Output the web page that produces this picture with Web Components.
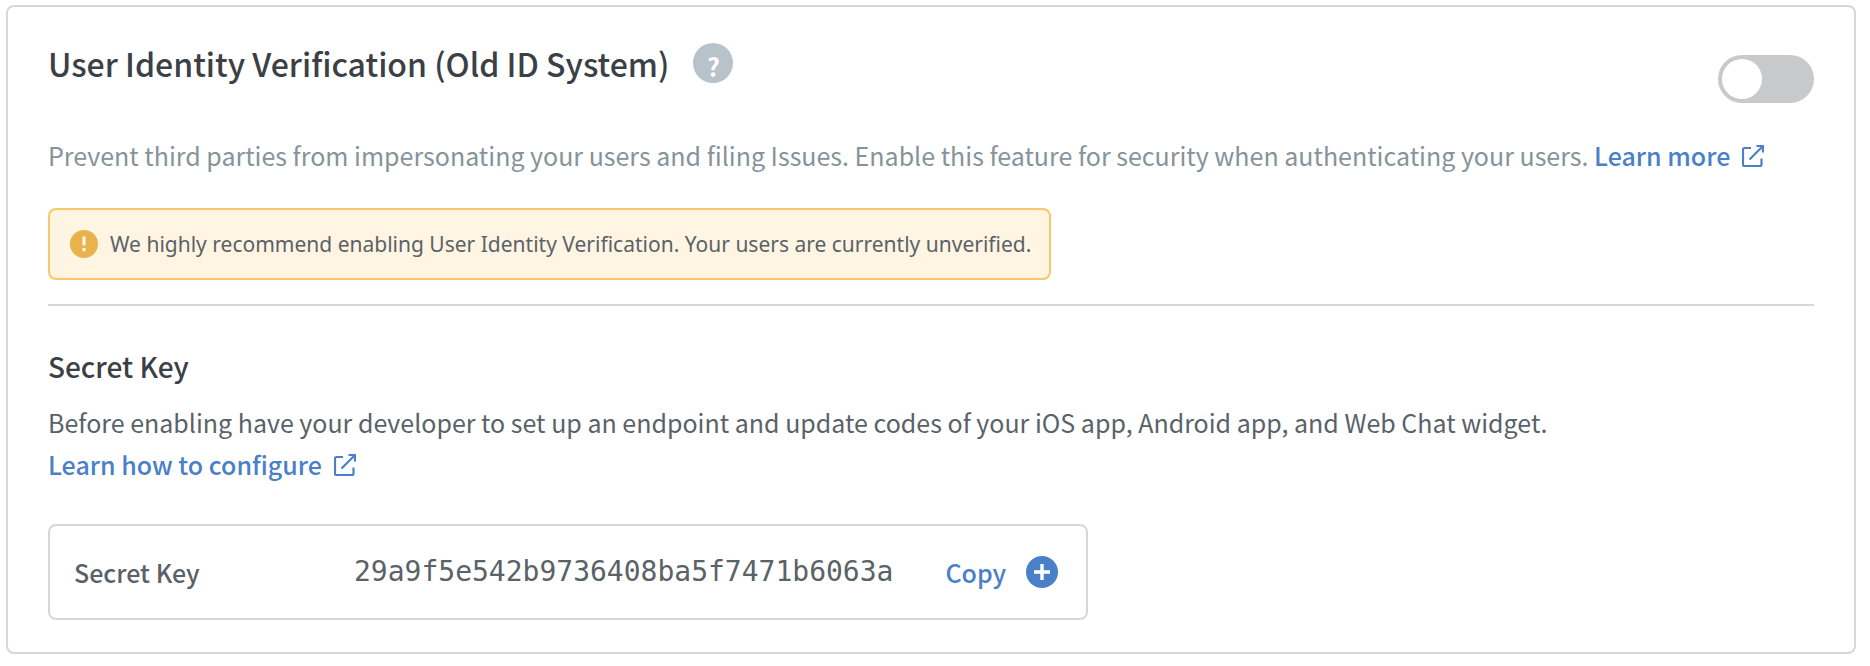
<!DOCTYPE html>
<html lang="en">
<head>
<meta charset="utf-8">
<meta name="viewport" content="width=device-width, initial-scale=1">
<title>User Identity Verification</title>
<style>
  :root {
    --heading: #3a4046;
    --text: #5a6268;
    --muted: #86939a;
    --link: #4a80c8;
    --line: #d5d7d8;
  }
  body {
    margin: 0;
    padding: 5px 14px 11px 6px;
    background: #fff;
    color: var(--text);
    font-family: "Noto Sans CJK SC", "Noto Sans", sans-serif;
    font-size: 25px;
    line-height: 42px;
  }
</style>
</head>
<body>
<settings-card>
  <card-header slot="header" heading="User Identity Verification (Old ID System)"></card-header>
  <card-text slot="intro" tone="muted">Prevent third parties from impersonating your users and filing Issues. Enable this feature for security when authenticating your users. <external-link href="#learn-more">Learn more</external-link></card-text>
  <alert-banner slot="intro">We highly recommend enabling User Identity Verification. Your users are currently unverified.</alert-banner>
  <key-section heading="Secret Key">
    <card-text>Before enabling have your developer to set up an endpoint and update codes of your iOS app, Android app, and Web Chat widget.<br><external-link href="#configure">Learn how to configure</external-link></card-text>
    <secret-key slot="key" label="Secret Key" value="29a9f5e542b9736408ba5f7471b6063a"></secret-key>
  </key-section>
</settings-card>

<script>
  const define = (name, html, setup) => {
    const template = document.createElement('template');
    template.innerHTML = html;
    customElements.define(name, class extends HTMLElement {
      constructor() {
        super();
        this.attachShadow({ mode: 'open' }).append(template.content.cloneNode(true));
      }
      connectedCallback() {
        if (setup) setup(this, (selector) => this.shadowRoot.querySelector(selector));
      }
    });
  };

  define('settings-card', `
    <style>
      :host { display: block; box-sizing: border-box; padding: 36px 40px 32px; border: 2px solid var(--line); border-radius: 8px; }
      hr { height: 2px; margin: 24px 0 40px; border: 0; background: var(--line); }
    </style>
    <slot name="header"></slot>
    <slot name="intro"></slot>
    <hr>
    <slot></slot>`);

  define('help-button', `
    <style>
      :host { display: block; flex: none; }
      button { display: block; box-sizing: border-box; width: 40px; height: 40px; padding: 6px 0 0; border: 0; border-radius: 50%;
        background: #b7c2cb; color: #fff; font: 700 25px/34px "Noto Sans CJK SC", sans-serif; cursor: pointer; }
    </style>
    <button type="button" title="Help">?</button>`);

  define('toggle-switch', `
    <style>
      :host { display: block; flex: none; }
      input { appearance: none; display: block; box-sizing: border-box; width: 96px; height: 48px; margin: 0; padding: 4px;
        border-radius: 24px; background: #c8c9cb; cursor: pointer; }
      input::before { content: ""; display: block; width: 40px; height: 40px; border-radius: 50%; background: #fff; }
      input:checked { background: var(--link); }
      input:checked::before { margin-left: auto; }
    </style>
    <input type="checkbox" role="switch">`,
    (host, $) => $('input').setAttribute('aria-label', host.getAttribute('label')));

  define('card-header', `
    <style>
      :host { display: flex; justify-content: space-between; align-items: flex-start; gap: 24px; }
      .title { display: flex; align-items: center; gap: 24px; }
      h1 { margin: 0; color: var(--heading); font-size: 32px; line-height: 40px; font-weight: 500; }
      toggle-switch { padding-top: 12px; }
    </style>
    <div class="title"><h1></h1><help-button></help-button></div>
    <toggle-switch></toggle-switch>`,
    (host, $) => {
      const heading = host.getAttribute('heading');
      $('h1').textContent = heading;
      $('toggle-switch').setAttribute('label', heading);
    });

  define('card-text', `
    <style>
      :host { display: block; }
      :host([tone="muted"]) { padding: 31px 0 32px; color: var(--muted); }
      p { margin: 0; }
    </style>
    <p><slot></slot></p>`);

  define('external-link', `
    <style>
      :host { display: inline; }
      a { color: var(--link); font-weight: 500; text-decoration: none; white-space: nowrap; }
      a:hover { text-decoration: underline; }
      svg { width: 22px; height: 22px; margin-left: 12px; vertical-align: -1px; }
    </style>
    <a><slot></slot><svg viewBox="0 0 22 22" fill="none" stroke="currentColor" stroke-width="2.2" aria-hidden="true"><path d="M9 3H2.5Q1 3 1 4.5V19.5Q1 21 2.5 21H18Q19.5 21 19.5 19.5V13.5M7.5 14.5L20.5 1.5M14.5 1H21V7.5"/></svg></a>`,
    (host, $) => { $('a').href = host.getAttribute('href'); });

  define('alert-banner', `
    <style>
      :host { display: flex; align-items: center; gap: 12px; box-sizing: border-box; width: fit-content; padding: 13px 18px 13px 20px;
        border: 2px solid #f9c86b; border-radius: 8px; background: #fff5e2; font-family: "Noto Sans", sans-serif; font-size: 21px; }
      svg { flex: none; width: 28px; height: 28px; }
    </style>
    <svg viewBox="0 0 28 28" aria-hidden="true"><circle cx="14" cy="14" r="14" fill="#e9b24c"/><path d="M12.4 6.5h3.2v9h-3.2zM12.4 18h3.2v3.2h-3.2z" fill="#fff5e2"/></svg>
    <span role="status"><slot></slot></span>`);

  define('key-section', `
    <style>
      :host { display: block; }
      h2 { margin: 0 0 15px; color: var(--heading); font-size: 28px; line-height: 40px; font-weight: 500; }
      .key { padding-top: 39px; }
    </style>
    <h2></h2>
    <slot></slot>
    <div class="key"><slot name="key"></slot></div>`,
    (host, $) => { $('h2').textContent = host.getAttribute('heading'); });

  define('secret-key', `
    <style>
      :host { display: flex; align-items: center; box-sizing: border-box; width: fit-content; height: 96px; padding: 0 28px 0 24px;
        border: 2px solid var(--line); border-radius: 8px; }
      .label { width: 280px; font-weight: 500; }
      output { margin-right: 52px; font-family: "DejaVu Sans Mono", monospace; font-size: 28px; }
      button { display: flex; align-items: center; gap: 20px; padding: 0; border: 0; background: none; color: var(--link);
        font: inherit; font-weight: 500; cursor: pointer; }
      svg { width: 32px; height: 32px; }
    </style>
    <label class="label" for="key"></label>
    <output id="key"></output>
    <button type="button">Copy<svg viewBox="0 0 32 32" aria-hidden="true"><circle cx="16" cy="16" r="16" fill="currentColor"/><path d="M16 8v16M8 16h16" stroke="#fff" stroke-width="3.4"/></svg></button>`,
    (host, $) => {
      $('.label').textContent = host.getAttribute('label');
      $('output').textContent = host.getAttribute('value');
      $('button').onclick = () => navigator.clipboard?.writeText(host.getAttribute('value'));
    });
</script>
</body>
</html>
